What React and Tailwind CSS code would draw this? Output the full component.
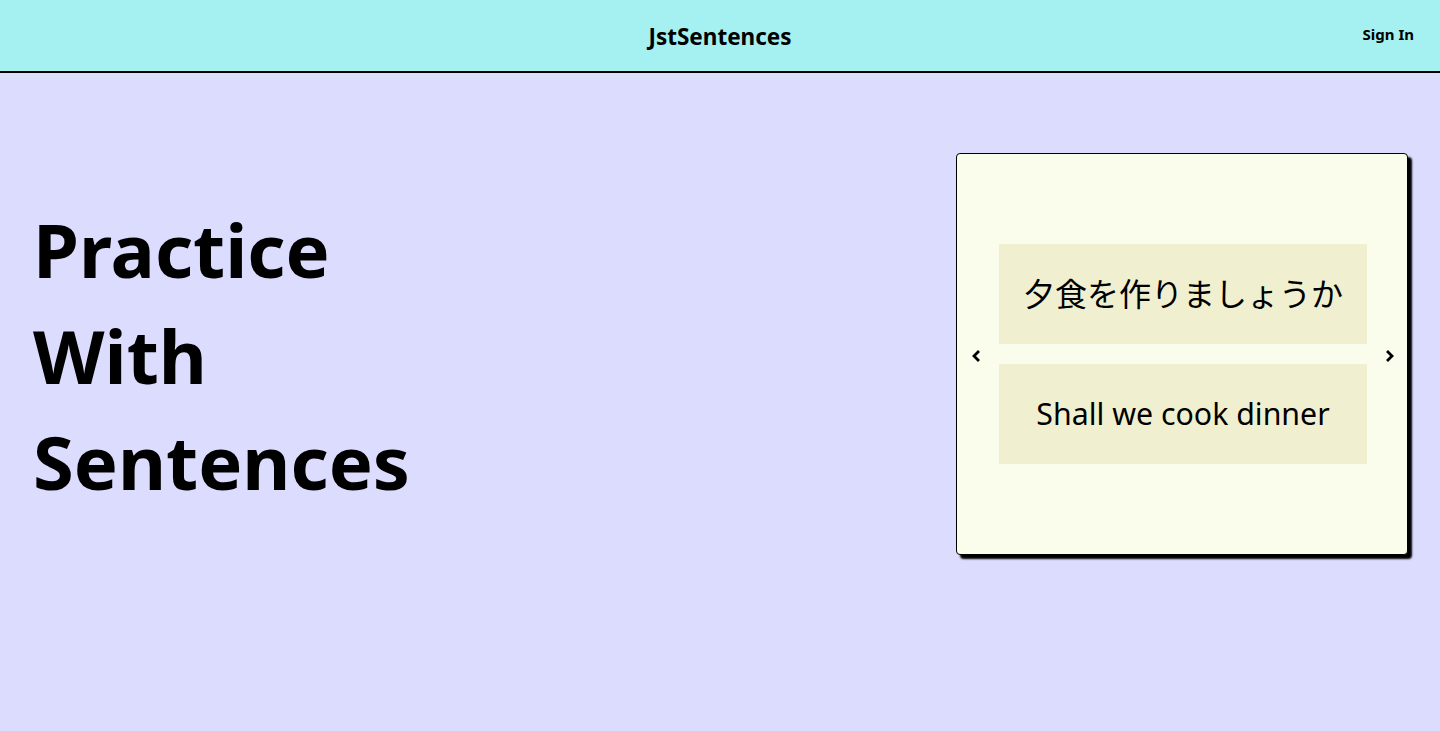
import React, { useState } from "react";

const sentences = [
  { jp: "夕食を作りましょうか", en: "Shall we cook dinner" },
  { jp: "明日は雨が降るでしょう", en: "It will probably rain tomorrow" },
];

function Chevron({ dir }) {
  return (
    <svg width="10" height="12" viewBox="0 0 10 12" fill="none">
      <path
        d={dir === "left" ? "M7 2 L3 6 L7 10" : "M3 2 L7 6 L3 10"}
        stroke="black"
        strokeWidth="2.8"
        strokeLinecap="square"
      />
    </svg>
  );
}

export default function App() {
  const [index, setIndex] = useState(0);
  const current = sentences[index];

  return (
    <div
      className="min-h-screen bg-[#dcdcff] text-black"
      style={{ fontFamily: '"Noto Sans", "Noto Sans CJK JP", sans-serif' }}
    >
      <header className="h-[73px] bg-[#a5f0f0] border-b-2 border-black flex items-center relative">
        <h1 className="flex-1 text-center text-[22.5px] font-bold pt-[3px]">JstSentences</h1>
        <button className="absolute right-[26px] top-[23px] text-[15px] font-bold">
          Sign In
        </button>
      </header>

      <main className="flex items-center justify-between pl-[33px] pr-[32px] pt-[80px]">
        <h2 className="text-[74px] leading-[106px] font-bold w-[500px] pt-[4px]">
          Practice
          <br />
          With
          <br />
          Sentences
        </h2>

        <div className="w-[452px] h-[402px] bg-[#fbfdec] border border-black rounded-[4px] shadow-[4px_4px_2px_#000] flex items-center justify-between pl-[14px] pr-[12px]">
          <button
            className="w-[10px] flex justify-center pt-[3px]"
            onClick={() => setIndex((i) => (i - 1 + sentences.length) % sentences.length)}
          >
            <Chevron dir="left" />
          </button>
          <div className="flex flex-col gap-[20px]">
            <div className="w-[368px] h-[100px] bg-[#f0f0d0] flex items-center justify-center text-[32px]">
              {current.jp}
            </div>
            <div className="w-[368px] h-[100px] bg-[#f0f0d0] flex items-center justify-center text-[30.3px]">
              {current.en}
            </div>
          </div>
          <button
            className="w-[10px] flex justify-center pt-[3px]"
            onClick={() => setIndex((i) => (i + 1) % sentences.length)}
          >
            <Chevron dir="right" />
          </button>
        </div>
      </main>
    </div>
  );
}
